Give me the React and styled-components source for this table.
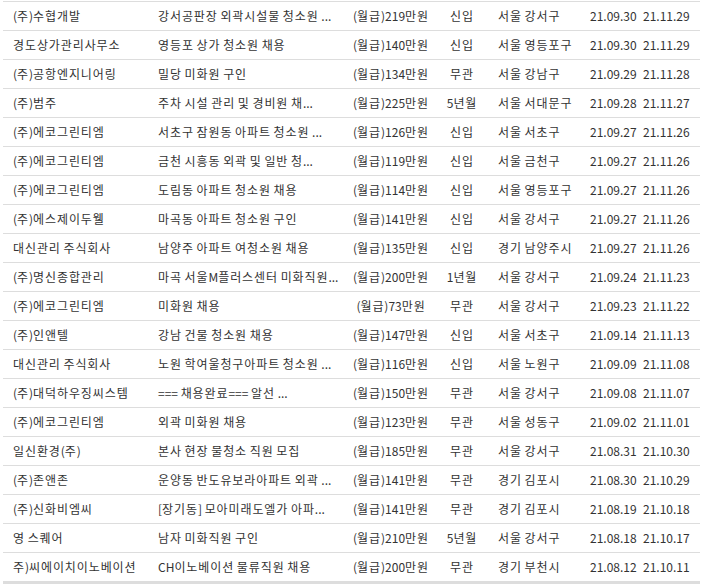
import React from "react";
import styled, { createGlobalStyle } from "styled-components";

const GlobalStyle = createGlobalStyle`
  html, body { margin: 0; padding: 0; background: #fff; }
  body { font-family: "Noto Sans CJK KR", "Noto Sans", sans-serif; }
`;

const Table = styled.table`
  margin: 1px 3px 0 3px;
  width: 697px;
  table-layout: fixed;
  border-collapse: separate;
  border-spacing: 0;
  border-top: 1px solid #dddddd;
  font-size: 12px;
  color: #333333;
`;

const Row = styled.tr`
  &:last-child td { border-bottom: 4px solid #dddddd; }
`;

const Cell = styled.td`
  height: 28px;
  padding: 0 0 0 ${(p) => p.$pad || 0}px;
  border-bottom: 1px solid #dddddd;
  text-align: ${(p) => p.$align || "left"};
  white-space: nowrap;
  overflow: hidden;
  vertical-align: middle;
  line-height: 28px;
`;

const Han = styled.span`
  letter-spacing: 0.9px;
`;

function Text({ value }) {
  const parts = value.split(/([\uAC00-\uD7A3]+)/);
  return parts.map((p, i) =>
    /[\uAC00-\uD7A3]/.test(p) ? <Han key={i}>{p}</Han> : <React.Fragment key={i}>{p}</React.Fragment>
  );
}

const rows = [
  ["(주)수협개발", "강서공판장 외곽시설물 청소원 ...", "(월급)219만원", "신입", "서울 강서구", "21.09.30", "21.11.29"],
  ["경도상가관리사무소", "영등포 상가 청소원 채용", "(월급)140만원", "신입", "서울 영등포구", "21.09.30", "21.11.29"],
  ["(주)공항엔지니어링", "밀당 미화원 구인", "(월급)134만원", "무관", "서울 강남구", "21.09.29", "21.11.28"],
  ["(주)범주", "주차 시설 관리 및 경비원 채...", "(월급)225만원", "5년월", "서울 서대문구", "21.09.28", "21.11.27"],
  ["(주)에코그린티엠", "서초구 잠원동 아파트 청소원 ...", "(월급)126만원", "신입", "서울 서초구", "21.09.27", "21.11.26"],
  ["(주)에코그린티엠", "금천 시흥동 외곽 및 일반 청...", "(월급)119만원", "신입", "서울 금천구", "21.09.27", "21.11.26"],
  ["(주)에코그린티엠", "도림동 아파트 청소원 채용", "(월급)114만원", "신입", "서울 영등포구", "21.09.27", "21.11.26"],
  ["(주)에스제이두웰", "마곡동 아파트 청소원 구인", "(월급)141만원", "신입", "서울 강서구", "21.09.27", "21.11.26"],
  ["대신관리 주식회사", "남양주 아파트 여청소원 채용", "(월급)135만원", "신입", "경기 남양주시", "21.09.27", "21.11.26"],
  ["(주)명신종합관리", "마곡 서울M플러스센터 미화직원...", "(월급)200만원", "1년월", "서울 강서구", "21.09.24", "21.11.23"],
  ["(주)에코그린티엠", "미화원 채용", "(월급)73만원", "무관", "서울 강서구", "21.09.23", "21.11.22"],
  ["(주)인앤텔", "강남 건물 청소원 채용", "(월급)147만원", "신입", "서울 서초구", "21.09.14", "21.11.13"],
  ["대신관리 주식회사", "노원 학여울청구아파트 청소원 ...", "(월급)116만원", "신입", "서울 노원구", "21.09.09", "21.11.08"],
  ["(주)대덕하우징씨스템", "=== 채용완료=== 알선 ...", "(월급)150만원", "무관", "서울 강서구", "21.09.08", "21.11.07"],
  ["(주)에코그린티엠", "외곽 미화원 채용", "(월급)123만원", "무관", "서울 성동구", "21.09.02", "21.11.01"],
  ["일신환경(주)", "본사 현장 물청소 직원 모집", "(월급)185만원", "무관", "서울 강서구", "21.08.31", "21.10.30"],
  ["(주)존앤존", "운양동 반도유보라아파트 외곽 ...", "(월급)141만원", "무관", "경기 김포시", "21.08.30", "21.10.29"],
  ["(주)신화비엠씨", "[장기동] 모아미래도엘가 아파...", "(월급)141만원", "무관", "경기 김포시", "21.08.19", "21.10.18"],
  ["영 스퀘어", "남자 미화직원 구인", "(월급)210만원", "5년월", "서울 강서구", "21.08.18", "21.10.17"],
  ["주)씨에이치이노베이션", "CH이노베이션 물류직원 채용", "(월급)200만원", "무관", "경기 부천시", "21.08.12", "21.10.11"],
];

const cols = [
  { w: 142, pad: 10, align: "left" },
  { w: 200, pad: 13, align: "left" },
  { w: 92, pad: 0, align: "center" },
  { w: 50, pad: 0, align: "center" },
  { w: 93, pad: 11, align: "left" },
  { w: 60, pad: 10, align: "left" },
  { w: 60, pad: 3, align: "left" },
];

export default function App() {
  return (
    <>
      <GlobalStyle />
      <Table>
        <colgroup>
          {cols.map((c, i) => (
            <col key={i} style={{ width: c.w }} />
          ))}
        </colgroup>
        <tbody>
          {rows.map((r, i) => (
            <Row key={i}>
              {r.map((v, j) => (
                <Cell key={j} $pad={cols[j].pad} $align={cols[j].align}>
                  <Text value={v} />
                </Cell>
              ))}
            </Row>
          ))}
        </tbody>
      </Table>
    </>
  );
}
